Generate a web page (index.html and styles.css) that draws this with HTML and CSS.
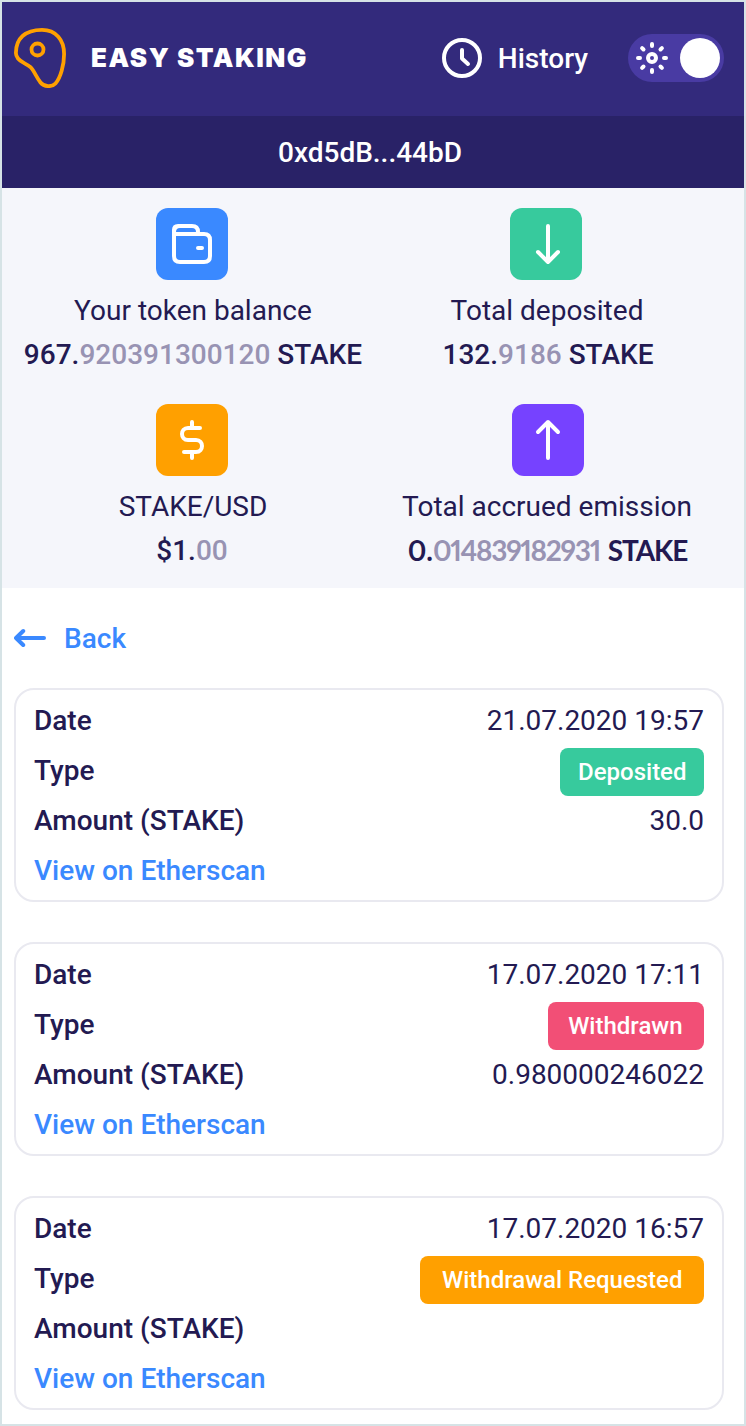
FILE: index.html
```
<!DOCTYPE html>
<html lang="en">
<head>
<meta charset="utf-8">
<title>Easy Staking</title>
<link rel="stylesheet" href="styles.css">
</head>
<body>
<div class="app">
  <header class="header">
    <svg class="logo" viewBox="0 0 52 60" fill="none" stroke="#ffa000" stroke-width="3.8">
      <path d="M1.9 25C1.9 10.500 11 1.900 28 1.900C42 1.900 50.100 12 50.100 26C50.100 37 46.500 50 41.500 55.500C38 59.300 30 59 26.500 54.500C22.500 49.500 20 42.500 16.500 39.200C12.500 35.500 7 34.500 4 30.500C2.500 28.500 1.900 27 1.900 25Z"/>
      <circle cx="23.500" cy="21.500" r="6"/>
    </svg>
    <h1 class="brand">EASY STAKING</h1>
    <a class="history">
      <svg class="clock" viewBox="0 0 40 40" fill="none" stroke="#fff" stroke-width="4" stroke-linecap="round" stroke-linejoin="round"><circle cx="20" cy="20" r="18"/><path d="M20 12V20.500L26 26"/></svg>
      <span>History</span>
    </a>
    <div class="toggle">
      <svg class="sun" viewBox="0 0 32 32" fill="none" stroke="#fff" stroke-width="4" stroke-linecap="round"><circle cx="16" cy="16" r="4"/><path d="M16 2V4M16 28V30M2 16H4M28 16H30M6.100 6.100L7.500 7.500M24.500 24.500L25.900 25.900M6.100 25.900L7.500 24.500M24.500 7.500L25.900 6.100"/></svg>
      <span class="knob"></span>
    </div>
  </header>
  <div class="address">0xd5dB...44bD</div>
  <section class="stats">
    <div class="stat">
      <div class="tile blue"><svg viewBox="0 0 72 72"><path d="M18 28V22Q18 18 22 18H36Q42 18 42 24V26M18 26H48Q54 26 54 32V48Q54 54 48 54H24Q18 54 18 48V24Q18 18 24 18M42 40H46"/></svg></div>
      <div class="label">Your token balance</div>
      <div class="value">967.<span class="fraction">920391300120</span> STAKE</div>
    </div>
    <div class="stat deposited">
      <div class="tile green"><svg viewBox="0 0 72 72"><path d="M38 18V54M28 44L38 54L48 44"/></svg></div>
      <div class="label">Total deposited</div>
      <div class="value">132.<span class="fraction">9186</span> STAKE</div>
    </div>
    <div class="stat price">
      <div class="tile orange"><svg viewBox="0 0 72 72"><path d="M44 24H32C24 24 24 36 32 36H40C48 36 48 48 40 48H28M36 18V24M36 48V54"/></svg></div>
      <div class="label">STAKE/USD</div>
      <div class="value">$1.<span class="fraction">00</span></div>
    </div>
    <div class="stat emission">
      <div class="tile violet"><svg viewBox="0 0 72 72"><path d="M36 54V18M26 28L36 18L46 28"/></svg></div>
      <div class="label">Total accrued emission</div>
      <div class="value rounded">0.<span class="fraction">014839182931</span> <span class="unit">STAKE</span></div>
    </div>
  </section>
  <a class="back">
    <svg class="back-arrow" viewBox="0 0 32 20" fill="none" stroke="#3a89ff" stroke-width="4" stroke-linecap="round" stroke-linejoin="round"><path d="M30 10H2M9.200 3L2 10L9.200 17"/></svg>
    <span>Back</span>
  </a>
  <main class="history-list">
    <article class="card">
      <div class="row"><b>Date</b><span>21.07.2020 19:57</span></div>
      <div class="row"><b>Type</b><span class="badge green">Deposited</span></div>
      <div class="row"><b>Amount (STAKE)</b><span>30.0</span></div>
      <div class="row"><a class="link">View on Etherscan</a></div>
    </article>
    <article class="card">
      <div class="row"><b>Date</b><span>17.07.2020 17:11</span></div>
      <div class="row"><b>Type</b><span class="badge red">Withdrawn</span></div>
      <div class="row"><b>Amount (STAKE)</b><span>0.980000246022</span></div>
      <div class="row"><a class="link">View on Etherscan</a></div>
    </article>
    <article class="card">
      <div class="row"><b>Date</b><span>17.07.2020 16:57</span></div>
      <div class="row"><b>Type</b><span class="badge orange requested">Withdrawal Requested</span></div>
      <div class="row"><b>Amount (STAKE)</b></div>
      <div class="row"><a class="link">View on Etherscan</a></div>
    </article>
  </main>
</div>
</body>
</html>
```
FILE: styles.css
```
* { box-sizing: border-box; }
body { margin: 0; background: #fff; font: 400 28px/44px Roboto, sans-serif; color: #231a52; }
svg { display: block; flex: none; }
b { font-weight: 500; }
.app { height: 1426px; border: 2px solid #d6e3e6; overflow: hidden; }
.header { height: 114px; padding: 0 20px 2px 12px; display: flex; align-items: center; background: #332a7c; color: #fff; }
.logo { width: 52px; height: 60px; }
.brand { margin: 0 auto 0 25px; font: 900 26px/44px Inter, sans-serif; letter-spacing: 1.5px; white-space: nowrap; }
.history { display: flex; align-items: center; gap: 16px; font-weight: 500; }
.history span { margin-top: 2px; }
.clock { width: 40px; height: 40px; }
.toggle { width: 96px; height: 48px; margin-left: 40px; padding: 0 4px 0 8px; border-radius: 24px; background: #493ba3; display: flex; align-items: center; justify-content: space-between; }
.sun { width: 32px; height: 32px; }
.knob { width: 40px; height: 40px; border-radius: 50%; background: #fff; }
.address { height: 72px; line-height: 74px; padding-right: 6px; text-align: center; background: #292267; color: #fff; font-weight: 500; }
.stats { height: 400px; padding: 20px 20px 0 14px; display: grid; grid-template-columns: 354px 354px; grid-auto-rows: 196px; background: #f5f6fb; text-align: center; }
.stat { white-space: nowrap; }
.tile { width: 72px; height: 72px; margin: 0 auto 9px 140px; border-radius: 12px; }
.emission .tile { margin-left: 142px; }
.tile svg { width: 72px; height: 72px; fill: none; stroke: #fff; stroke-width: 4; stroke-linecap: round; stroke-linejoin: round; }
.blue { background: #3a89ff; }
.green { background: #37ca9d; }
.orange { background: #ffa000; }
.violet { background: #7642ff; }
.red { background: #f24f76; }
.value { font-weight: 500; }
.deposited .value { padding-left: 2px; }
.price .value { padding-right: 2px; }
.fraction { color: #9893b3; }
.value.rounded { margin-top: -1px; padding-left: 1px; font-family: Lato, sans-serif; font-weight: 700; font-feature-settings: "pnum"; }
.rounded .fraction { letter-spacing: -1.3px; margin-right: 1px; }
.rounded .unit { letter-spacing: -1.1px; }
.back { height: 100px; padding-left: 12px; display: flex; align-items: center; gap: 18px; color: #3a89ff; font-weight: 500; }
.back span { padding-top: 2px; }
.back-arrow { width: 32px; height: 20px; }
.history-list { padding: 0 20px 0 12px; display: grid; gap: 40px; }
.card { height: 214px; padding: 6px 18px 4px; border: 2px solid #e9e9f0; border-radius: 20px; }
.row { height: 50px; display: flex; align-items: center; justify-content: space-between; }
.badge { height: 48px; margin-top: 2px; padding: 0 17.5px 0 18.5px; border-radius: 8px; color: #fff; font-size: 24px; font-weight: 500; line-height: 48px; }
.badge.red { padding: 0 21.5px 0 20.5px; }
.badge.requested { padding: 0 21.5px 0 22.5px; }
.link { color: #3a89ff; font-weight: 500; }
```
